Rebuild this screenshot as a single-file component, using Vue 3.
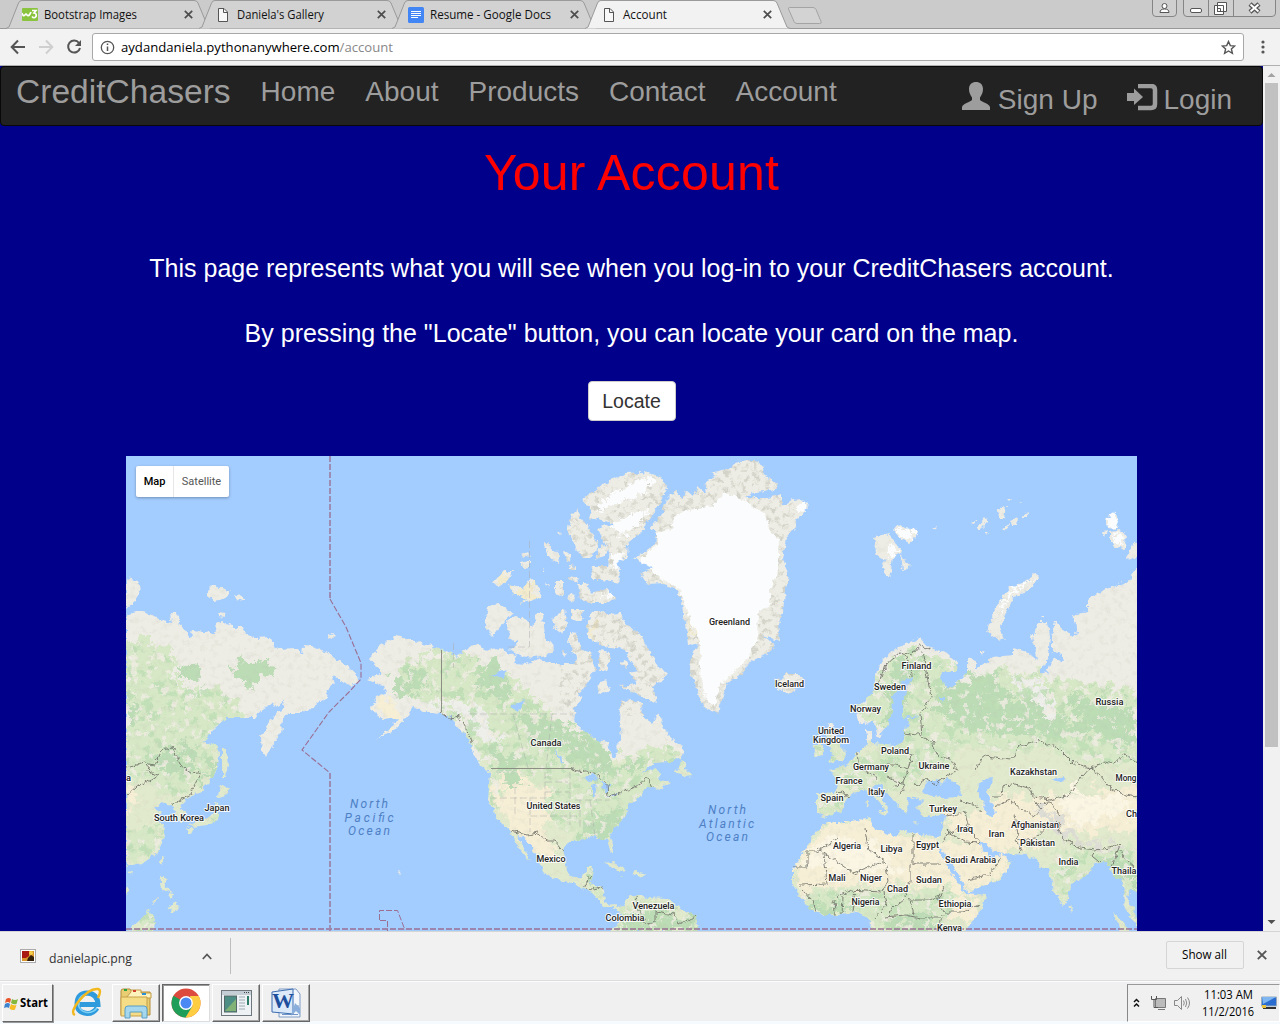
<script setup>
const tabs = [
  { title: 'Bootstrap Images', icon: 'w3', w: 93 },
  { title: "Daniela's Gallery", icon: 'page', w: 87 },
  { title: 'Resume - Google Docs', icon: 'docs', w: 121 },
  { title: 'Account', icon: 'page', w: 44, active: true },
]
const links = ['Home', 'About', 'Products', 'Contact', 'Account']

const land = [
  // north-east Asia
  '126,615 140,611 152,615 164,621 172,623 170,613 177,613 180,624 190,638 193,630 205,632 214,634 216,624 222,621 232,627 243,627 246,636 255,638 270,637 274,646 278,649 296,648 302,654 303,646 318,648 332,656 345,665 358,675 360,682 350,685 340,680 332,676 334,685 328,690 326,698 313,707 301,713 289,713 283,720 281,733 273,745 266,758 262,752 261,737 269,723 276,713 282,710 284,700 276,707 273,703 263,708 256,718 226,718 216,727 203,742 216,745 219,753 218,767 209,783 198,793 189,797 181,805 186,818 181,823 176,818 174,807 168,805 163,802 154,808 163,812 156,818 163,827 165,837 158,853 143,863 131,865 126,867',
  '126,578 138,580 141,590 136,600 126,609',
  '208,590 213,585 219,588 223,588 230,593 227,598 214,601 208,596',
  '235,594 246,599 243,601 236,599', '218,612 225,613 226,617 219,616', '327,636 333,633 337,637 328,639',
  '222,747 226,750 228,765 225,778 222,778 222,757',
  '221,785 231,789 226,795 218,797 219,790',
  '216,802 220,807 218,820 206,825 193,827 189,825 206,820 213,813',
  '186,827 194,829 191,835 188,834', '162,856 165,857 162,864 160,861',
  '160,876 165,876 166,887 171,893 162,889', '168,893 174,894 172,899', '166,908 177,903 178,910 174,912',
  '149,910 155,919 154,931 128,931 140,920', '127,872 133,871 130,876', '126,883 129,890 126,896', '152,903 158,897 159,898 153,904',
  // North America and the top of South America
  '369,658 380,646 397,636 408,639 427,645 442,649 457,656 472,646 478,644 485,651 497,648 517,656 513,663 527,664 537,659 550,664 573,664 577,656 568,643 570,633 577,634 580,649 590,653 595,669 590,679 583,689 578,696 583,698 575,707 573,720 580,727 597,740 608,742 610,753 615,757 618,752 617,743 622,737 620,723 621,702 630,699 642,705 643,717 652,723 658,713 663,727 673,740 683,748 682,757 670,762 653,763 642,773 657,768 660,780 670,782 660,790 655,788 650,786 642,792 640,798 630,803 625,817 613,830 610,837 613,850 611,853 607,840 593,837 580,840 568,843 563,853 567,870 573,878 582,877 587,867 594,867 590,883 603,887 604,897 607,905 615,904 622,907 628,897 637,895 647,898 667,899 680,908 695,915 698,927 700,932 610,932 618,925 622,913 613,908 605,908 597,898 592,893 580,887 570,882 557,880 543,872 540,860 528,843 517,833 521,842 530,861 527,858 517,845 510,832 497,817 488,800 490,773 480,765 472,750 470,740 458,727 448,715 433,712 423,712 413,707 407,717 397,728 380,738 376,740 390,729 398,718 383,720 371,710 376,697 386,693 383,686 367,679 382,673',
  '488,606 500,604 513,614 503,623 493,636 485,628',
  '505,624 515,616 525,619 533,626 537,613 543,613 545,636 554,648 547,656 533,658 520,656 510,649 518,643 507,638 510,631',
  '508,584 523,588 530,579 542,589 540,598 520,604 527,598 513,594',
  '493,583 503,571 512,571 508,581 497,587', '521,555 527,551 530,557', '520,563 529,561 529,568 524,569',
  '543,543 548,543 559,556 558,563 550,558', '564,552 571,554 570,562 566,560', '558,530 561,532 560,537', '542,567 545,572 543,572', '568,565 576,566 576,569 569,568',
  '577,509 582,519 593,534 597,543 592,558 583,558 577,553 575,543 567,531 572,514',
  '582,499 598,488 613,479 626,473 643,472 660,476 667,488 660,503 657,508 640,533 628,544 627,556 618,563 620,578 618,584 600,579 590,579 593,566 608,566 610,549 604,556 595,560 597,548 606,546 598,529 613,523 590,518 592,511',
  '590,593 607,589 616,599 607,603 590,603 580,599 578,583 587,583', '567,576 577,577 578,583 570,581',
  '555,581 563,581 563,598 555,593', '545,581 551,589 547,586', '570,593 576,595 574,602 568,600',
  '552,619 565,609 567,626 562,633 555,628', '571,609 585,609 580,621 571,619',
  '587,623 593,611 599,611 608,614 620,613 627,624 640,634 650,653 660,669 667,673 660,683 653,686 657,703 640,696 620,686 637,684 630,673 638,671 633,663 623,649 603,646 588,638',
  '600,650 610,652 608,669 598,671', '623,660 628,662 626,668 622,665', '597,685 605,680 611,690 600,694', '562,650 567,654 563,657',
  '682,758 685,768 692,776 685,777 675,773', '603,863 612,862 627,870 620,871', '632,873 638,872 647,874 640,877', '398,871 401,872 399,874', '620,876 625,877 620,877',
  // Greenland and Iceland
  '667,499 675,491 683,498 686,490 693,496 697,486 707,495 705,481 717,476 710,473 730,468 737,461 753,460 765,466 763,474 777,483 775,489 753,493 743,498 767,498 782,494 782,506 792,500 802,499 809,506 797,519 795,528 787,536 783,559 789,576 785,589 783,613 778,623 780,641 762,635 777,646 763,656 748,663 742,674 727,683 723,696 718,714 705,708 698,693 690,669 692,656 698,643 688,646 687,633 683,616 682,599 675,589 663,583 647,584 640,573 653,569 635,558 655,544 657,533 650,528 662,513',
  '775,677 782,680 786,674 800,674 804,683 788,693 778,689',
  // arctic islands north of Russia
  '873,537 890,533 895,543 903,552 893,557 890,578 882,568 885,560 877,557', '893,530 898,524 905,528 918,530 916,537 909,543 900,538', '901,553 906,562 911,566 903,570', '932,529 937,527 935,531',
  '972,523 978,519 975,524', '977,527 985,517 988,522 980,530', '998,510 1006,506 1004,518 999,518', '1010,521 1018,518 1017,525 1012,525', '1021,518 1027,511 1027,518', '1002,529 1009,524 1006,531', '1007,499 1011,499 1008,502', '1019,502 1023,503 1020,504', '985,532 988,532 986,534',
  '1106,521 1114,511 1119,520 1117,529 1107,528', '1110,532 1118,531 1126,533 1125,550 1115,547 1110,540', '1126,560 1134,542 1137,542 1137,558', '1102,532 1107,531 1105,537',
  '1035,574 1039,577 1034,586 1013,599 1004,617 1000,627 1005,641 997,639 987,631 992,616 1001,598 1009,587 1026,582', '979,651 984,651 982,656', '1041,616 1045,616 1044,619',
  // Europe, Asia and Africa
  '877,670 883,660 897,647 920,638 928,647 947,653 958,663 957,672 942,672 940,678 948,688 957,683 967,673 967,658 975,660 975,670 993,657 1013,655 1013,648 1027,652 1037,660 1032,637 1038,622 1048,622 1050,637 1048,657 1040,672 1047,673 1053,657 1063,663 1062,655 1052,652 1052,637 1055,620 1060,627 1073,637 1078,633 1072,615 1088,612 1088,600 1103,590 1127,582 1137,567 1142,565 1142,897 1130,890 1127,897 1138,920 1138,926 1123,907 1125,893 1122,880 1113,877 1110,867 1103,862 1093,865 1090,873 1070,885 1068,900 1063,907 1053,890 1048,867 1040,867 1037,860 1027,855 1000,853 993,850 980,840 983,850 990,857 999,856 1002,853 1012,863 1000,880 967,892 963,882 950,862 940,847 939,850 950,870 965,893 987,895 980,913 967,927 965,932 870,932 871,920 858,912 830,915 813,912 800,897 793,885 793,870 805,850 815,833 827,822 847,822 870,817 873,828 897,837 900,830 913,833 940,837 943,823 945,815 923,817 917,807 923,800 908,797 907,815 898,805 893,800 880,785 872,787 888,807 887,813 880,802 865,790 850,795 840,812 823,817 817,813 817,792 835,793 838,780 830,770 847,765 858,752 868,745 866,730 872,730 872,743 897,745 903,742 903,728 910,727 908,718 923,715 903,717 903,700 912,678 903,680 892,697 893,710 887,727 878,737 873,720 860,725 857,713 857,707 873,693',
  '828,723 833,725 831,732 838,738 842,748 847,753 843,760 828,763 833,755 830,747 827,735', '815,745 823,745 823,755 814,757', '866,801 869,801 868,808', '878,811 886,811 885,816', '912,821 920,822 914,823', '1069,903 1074,908 1071,912', '1113,913 1123,921 1130,932 1122,932',
]

const green = [
  '126,640 150,640 175,660 180,690 215,690 235,700 240,715 205,735 215,750 205,780 170,800 160,790 126,775',
  '400,668 420,655 445,655 470,655 490,662 515,680 540,705 560,720 600,740 612,760 680,745 682,757 660,780 640,800 625,820 610,835 580,840 555,825 545,800 550,780 490,770 460,725 440,710 400,690',
  '490,770 505,775 500,790 497,810 488,800', '120,825 165,825 165,850 126,866', '128,932 145,912 156,920 156,932', '585,868 595,868 590,885 608,890 600,900', '620,905 640,898 700,920 700,932 615,932',
  '860,715 880,670 905,650 960,665 945,690 1000,665 1060,680 1137,690 1137,760 1100,765 1040,745 1010,755 970,745 900,790 850,790 830,780 850,760 900,740 905,700 890,700 885,730',
  '800,895 830,890 900,895 950,888 955,905 940,932 870,932 860,912 815,912', '1050,870 1060,850 1137,850 1137,932 1120,880 1090,870 1068,900',
  '825,730 840,745 845,760 828,762', '814,745 823,745 823,757 814,757', '820,800 845,800 838,815 820,815', '185,823 218,822 215,806 185,820',
]
const dark = [
  '180,668 196,662 204,672 198,683 184,680', '235,663 258,655 270,665 262,680 250,688 238,678', '127,700 140,708 138,725 126,724', '150,755 185,745 195,770 185,775 160,765',
  '212,756 218,760 208,780 198,788', '478,660 500,665 512,690 500,700 480,690', '520,715 560,720 605,745 612,765 640,760 640,772 600,775 570,755 530,740', '490,745 515,755 520,785 508,790 500,768 488,763',
  '390,680 420,668 430,680 400,700', '575,830 600,820 618,805 625,812 610,834 585,838', '895,660 920,655 915,675 900,720 885,735', '940,690 990,670 1010,690 970,715 930,715',
  '950,700 1040,700 1060,720 1090,725 1080,740 1000,735 960,730', '1060,690 1100,700 1137,710 1137,745 1095,735', '635,915 660,908 695,920 698,932 620,932', '890,918 930,915 935,932 885,932', '1105,865 1120,855 1137,870 1137,890 1118,878', '808,905 850,905 855,912 815,912',
  '589,868 594,868 592,878 585,878',
]
const sand = [
  '497,780 515,770 535,782 548,790 545,825 555,850 545,868 530,850 500,818', '372,700 395,700 400,722 385,720', '540,718 580,735 600,742 575,735', '126,790 138,780 140,805 126,812',
  '793,880 805,850 825,822 870,817 900,835 940,838 960,880 963,890 900,888 850,885 800,890', '942,842 985,845 1012,863 1000,880 967,892 950,862', '945,818 985,810 1030,812 1045,845 1000,855 960,838',
  '985,795 1040,800 1060,795 1137,785 1137,830 1070,830 1040,825 1000,815', '955,895 985,895 970,925 950,915',
]
const borders = [
  'M126 768 L145 763 155 765 162 750 172 748 180 765 192 774 202 772 195 785 190 795 172 805',
  'M126 796 L137 786 152 780 158 776 147 770 149 764', 'M571 768 L578 771 593 773 607 784 608 797 628 790 640 785 647 777 652 787', 'M441 712 L452 720 458 715 470 735 472 742',
  'M510 831 L527 835 538 833 547 841 555 841 565 853', 'M583 887 L590 876 M587 890 L603 887 M635 897 L638 908 645 925 655 922 655 912 674 915 678 924 690 920 695 916',
  'M877 690 L885 665 900 652 912 655 920 646 930 649 M903 653 L911 665 912 678 M922 650 L926 670 931 697 920 714 922 735 M903 733 L918 735 932 742 937 755 950 758 957 770 935 785 927 780 915 785 M897 748 L912 755 908 770 895 765 880 765 M858 752 L860 768 877 778 M908 770 L903 782 892 787 M887 777 L905 785 900 795 M837 791 L850 796',
  'M976 770 L980 760 985 756 1012 759 1018 748 1040 739 1044 743 1056 746 1072 762 1090 768 1075 785 1070 795 1050 800 1035 797 1028 788 1015 784 1002 787 1001 797 992 797 M1090 768 L1105 762 1112 764 1125 755 1137 762 M1090 768 L1100 775 1110 788 1125 795 1137 797',
  'M995 807 L1010 800 1020 808 1034 817 1042 810 1036 803 1050 802 1060 815 M1015 815 L1018 835 1016 840 1022 850 1020 854 M1018 840 L1036 838 1048 825 1058 823 1062 838 1080 848 1095 850 1110 848 1120 845 M1095 850 L1092 855 1100 862 M1120 845 L1115 858 1111 867 M1120 850 L1126 860 1135 868',
  'M945 816 L965 813 970 830 980 842 M942 842 L948 833 957 829 M948 832 L965 842 978 843 M960 800 L975 805 983 812 M967 880 L988 875 997 865 1001 856',
  'M817 848 L853 873 885 861 868 850 865 828 M913 834 V864 H940 M885 861 L888 880 882 892 850 890 838 898 M793 867 H807 V852 H817 L838 838 M824 854 L827 884 800 885 M910 862 L910 882 905 892 910 900 930 900 940 895 M855 890 L852 912 M884 892 L886 905 875 918 M888 912 L905 898 M945 885 L938 900 944 912 962 912 980 905 M886 917 L905 915 920 918 940 918 M943 915 L938 930 M815 912 L812 900 803 890 M835 914 L834 900 M842 913 L843 897 M910 900 L914 915',
]
const lakes = ['922,793 927,782 937,779 942,784 947,778 960,785 961,797 940,798', '977,785 985,779 992,778 990,787 986,793 993,803 995,815 987,815 982,800', '583,778 592,774 598,779 590,781', '592,785 597,783 595,798 592,796', '600,781 609,785 607,793 603,788', '606,799 618,792 617,795', '554,747 563,760 562,764', '510,707 525,700 518,712', '490,675 507,668 505,678', '940,697 945,697 944,703', '1051,780 1065,777 1062,782']

const labels = [
  ['Greenland', 729.5, 625, 41], ['Iceland', 789.5, 687, 29], ['Finland', 916.5, 669, 30], ['Sweden', 890, 690, 32], ['Norway', 865.5, 712, 31],
  ['Russia', 1109.5, 705, 28], ['United', 831, 734, 26], ['Kingdom', 831, 743, 36], ['Poland', 895, 754, 28], ['Germany', 871, 770, 36], ['Ukraine', 934, 769, 31],
  ['France', 849, 784, 27], ['Italy', 876.5, 795, 17], ['Spain', 832, 801, 23], ['Turkey', 943, 812, 28], ['Kazakhstan', 1033.5, 775, 47],
  ['Iraq', 965, 832, 16], ['Iran', 996.5, 837, 16], ['Afghanistan', 1035, 828, 48], ['Pakistan', 1037.5, 846, 35], ['India', 1068.5, 865, 20],
  ['Algeria', 847, 849, 28], ['Libya', 891.5, 852, 22], ['Egypt', 927.5, 848, 23], ['Saudi Arabia', 970.5, 863, 51], ['Mali', 837, 881, 17], ['Niger', 871, 881, 22],
  ['Chad', 897.5, 892, 21], ['Sudan', 929, 883, 26], ['Nigeria', 865.5, 905, 28], ['Ethiopia', 955, 907, 33], ['Kenya', 949.5, 931, 25],
  ['Canada', 546, 746, 31], ['United States', 553.5, 809, 54], ['Mexico', 551, 862, 29], ['Venezuela', 653.5, 909, 42], ['Colombia', 625, 921, 39],
  ['Japan', 217, 811, 25], ['South Korea', 179, 821, 50], ['Mong', 1126, 781, 21], ['Ch', 1131.5, 817, 11], ['Thaila', 1124, 874, 25], ['a', 128.5, 781, 5],
]
const oceans = [
  ['North', 369, 808, 38], ['Pacific', 369, 822, 49], ['Ocean', 369, 835, 42],
  ['North', 727, 814, 38], ['Atlantic', 726.5, 828, 55], ['Ocean', 727, 841, 42],
]
</script>

<template>
  <div class="screen">
    <header class="tabstrip">
      <div v-for="t in tabs" :key="t.title" class="tab" :class="{ active: t.active }">
        <svg class="shape" width="206" height="29" viewBox="0 0 206 29">
          <path d="M0 28.5 L3 27 L12.5 3 Q13.500 .5 16 .5 H188 Q191 .5 192 3 L202 27 L205 28.500" />
        </svg>
        <svg v-if="t.icon === 'w3'" class="fav" width="16" height="16" viewBox="0 0 16 16">
          <rect y="1" width="16" height="13" rx="1" fill="#8ac43f" />
          <path d="M0 6 Q1 10 3 8 Q4 6 5 8 Q7 10 9 5" fill="none" stroke="#fff" stroke-width="1.700" />
          <path d="M10 3.500 H14 L12 6 Q15 6.500 14 9.500 Q12 12 10 9.500" fill="none" stroke="#fff" stroke-width="1.700" />
        </svg>
        <svg v-else-if="t.icon === 'docs'" class="fav" width="16" height="16" viewBox="0 0 16 16">
          <rect width="16" height="16" rx="1.500" fill="#4285f4" />
          <path d="M3 4.500 H13 M3 6.500 H13 M3 8.500 H13 M3 10.500 H10" stroke="#fff" stroke-width="1" />
        </svg>
        <svg v-else class="fav" width="16" height="16" viewBox="0 0 16 16">
          <path d="M3.500 1.500 H9 L12.500 5 V14.500 H3.500 Z" fill="#f8f8f8" stroke="#555" />
          <path d="M8.500 1.500 V5.500 H12.500" fill="none" stroke="#555" />
        </svg>
        <svg class="label" width="128" height="20"><text x="0" y="14" :textLength="t.w" lengthAdjust="spacingAndGlyphs">{{ t.title }}</text></svg>
        <svg class="close" width="9" height="9"><path d="M.8 .8 L8.200 8.200 M8.200 .8 L.8 8.200" stroke="#4d4d4d" stroke-width="1.700" /></svg>
      </div>
      <svg class="newtab" width="36" height="19"><path d="M2.500 .5 H26 Q28 .5 29 2.500 L34 14.500 Q35 16.500 32.500 16.500 H10 Q8 16.500 7 14.500 L1.500 2 Q1 .5 2.500 .5Z" fill="#d3d3d3" stroke="#a4a4a4" /></svg>
      <span class="grow"></span>
      <svg class="user" width="25" height="17"><path d="M.5 0 V13 Q.5 16.500 4 16.500 H21 Q24.500 16.500 24.500 13 V0" fill="#cfcfcf" stroke="#858585" /><circle cx="12.500" cy="6" r="2.500" fill="#fff" stroke="#555" /><path d="M8 12.500 Q8 9 12.500 9 Q17 9 17 12.500Z" fill="#fff" stroke="#555" /></svg>
      <svg class="winctl" width="93" height="17">
        <path d="M.5 0 V13 Q.5 16.500 4 16.500 H89 Q92.500 16.500 92.500 13 V0 M25.500 0 V16 M50.500 0 V16" fill="#cfcfcf" stroke="#858585" />
        <rect x="7.500" y="8.500" width="11" height="4" rx="1.500" fill="#fff" stroke="#555" />
        <path d="M34.500 2.500 H43.500 V11.500 H34.500Z M31.500 5.500 H40.500 V14.500 H31.500Z M34.500 8.500 H37.500 V11.500 H34.500Z" fill="#fff" stroke="#555" />
        <path d="M67 4 L76 12 M76 4 L67 12" stroke="#555" stroke-width="4.500" /><path d="M67.500 4.500 L75.500 11.500 M75.500 4.500 L67.500 11.500" stroke="#fff" stroke-width="2" />
      </svg>
    </header>

    <div class="toolbar">
      <svg class="tools" width="84" height="24" viewBox="0 0 84 24" fill="none" stroke-width="2">
        <path d="M25 12 H12 M18 5.500 L11.700 12 L18 18.500" stroke="#555" />
        <path d="M39 12 H52 M46 5.500 L52.300 12 L46 18.500" stroke="#cfcfcf" />
        <path d="M79 8 A6 6 0 1 0 80 13" stroke="#555" /><path d="M81 5 V11 H75Z" fill="#555" />
      </svg>
      <div class="omnibox">
        <svg width="15" height="15" viewBox="0 0 15 15" fill="none" stroke="#555"><circle cx="7.500" cy="7.500" r="6.200" stroke-width="1.300" /><path d="M7.500 6.500 V11 M7.500 3.500 V5" stroke-width="1.500" /></svg>
        <svg class="url" width="280" height="20"><text x="0" y="15" textLength="272" lengthAdjust="spacingAndGlyphs">aydandaniela.pythonanywhere.com<tspan fill="#888">/account</tspan></text></svg>
        <span class="grow"></span>
        <svg width="15" height="15" viewBox="0 0 15 15"><path d="M7.500 1.500 L9.300 5.600 L13.700 6 L10.400 9 L11.400 13.300 L7.500 11 L3.600 13.300 L4.600 9 L1.300 6 L5.700 5.600Z" fill="none" stroke="#555" stroke-width="1.400" /></svg>
      </div>
      <svg class="dots" width="4" height="14" fill="#555"><circle cx="2" cy="2" r="1.600" /><circle cx="2" cy="7" r="1.600" /><circle cx="2" cy="12" r="1.600" /></svg>
    </div>

    <div class="viewport">
      <div class="page">
        <nav class="navbar">
          <a class="brand">CreditChasers</a>
          <a v-for="l in links" :key="l" class="link">{{ l }}</a>
          <span class="grow"></span>
          <a class="link right">
            <svg width="28" height="28" viewBox="0 0 28 28"><path d="M14 0 C18 0 21 2.500 21 7 C21 11 19.500 13 18 15.500 V18 C20 20 27 21.500 28 25 V28 H0 V25 C1 21.500 8 20 10 18 V15.500 C8.500 13 7 11 7 7 C7 2.500 10 0 14 0Z" fill="#9d9d9d" /></svg>
            <span>Sign Up</span>
          </a>
          <a class="link right login">
            <svg width="31" height="27" viewBox="0 0 31 27"><path d="M0 9 H7 V4.500 L16 13 L7 21 V17 H0Z" fill="#9d9d9d" /><path d="M11 2 H24 Q28 2 28 6 V20 Q28 24 24 24 H11" fill="none" stroke="#9d9d9d" stroke-width="4.500" /></svg>
            <span>Login</span>
          </a>
        </nav>
        <h1>Your Account</h1>
        <p>This page represents what you will see when you log-in to your CreditChasers account.</p>
        <p class="second">By pressing the "Locate" button, you can locate your card on the map.</p>
        <button class="locate">Locate</button>

        <div class="map">
          <svg width="1011" height="475" viewBox="126 456 1011 475">
            <defs>
              <clipPath id="landClip"><polygon v-for="(p, i) in land" :key="i" :points="p" /></clipPath>
              <clipPath id="greenClip"><polygon v-for="(p, i) in green" :key="i" :points="p" /></clipPath>
              <filter id="coast" x="116" y="446" width="1031" height="495" filterUnits="userSpaceOnUse">
                <feTurbulence type="fractalNoise" baseFrequency=".18" numOctaves="3" seed="4" result="n" />
                <feDisplacementMap in="SourceGraphic" in2="n" scale="6.500" xChannelSelector="R" yChannelSelector="G" />
              </filter>
              <filter id="ragged" x="116" y="446" width="1031" height="495" filterUnits="userSpaceOnUse">
                <feTurbulence type="fractalNoise" baseFrequency=".09" numOctaves="4" seed="9" result="n" />
                <feDisplacementMap in="SourceGraphic" in2="n" scale="32" xChannelSelector="R" yChannelSelector="G" />
              </filter>
              <filter id="rough" x="116" y="446" width="1031" height="495" filterUnits="userSpaceOnUse">
                <feTurbulence type="fractalNoise" baseFrequency=".2" numOctaves="3" seed="2" result="n" />
                <feDisplacementMap in="SourceGraphic" in2="n" scale="13" xChannelSelector="R" yChannelSelector="G" />
              </filter>
              <filter id="speckPale" x="116" y="446" width="1031" height="495" filterUnits="userSpaceOnUse" color-interpolation-filters="sRGB">
                <feTurbulence type="fractalNoise" baseFrequency=".13" numOctaves="4" seed="21" />
                <feColorMatrix values="0 0 0 0 .94  0 0 0 0 .93  0 0 0 0 .89  0 0 0 12 -7.100" />
              </filter>
              <filter id="speckGreen" x="116" y="446" width="1031" height="495" filterUnits="userSpaceOnUse" color-interpolation-filters="sRGB">
                <feTurbulence type="fractalNoise" baseFrequency=".09" numOctaves="4" seed="33" />
                <feColorMatrix values="0 0 0 0 .74  0 0 0 0 .87  0 0 0 0 .71  0 0 0 12 -6.700" />
              </filter>
              <filter id="relief" x="116" y="446" width="1031" height="495" filterUnits="userSpaceOnUse" color-interpolation-filters="sRGB">
                <feTurbulence type="fractalNoise" baseFrequency=".17" numOctaves="4" seed="12" />
                <feColorMatrix values="0 0 0 0 .72  0 0 0 0 .72  0 0 0 0 .67  0 0 0 4 -2" />
              </filter>
            </defs>
            <rect x="126" y="456" width="1011" height="475" fill="#a3ccff" />
            <g filter="url(#coast)">
              <g clip-path="url(#landClip)">
                <rect x="116" y="446" width="1031" height="495" fill="#eeede5" />
                <path d="M126 735 H250 V932 H126Z M480 760 H700 V932 H480Z M800 740 H1147 V932 H790Z" fill="#e2eacd" />
                <g filter="url(#ragged)">
                  <polygon v-for="(p, i) in green" :key="i" :points="p" fill="#d6e8c6" />
                  <polygon v-for="(p, i) in sand" :key="i" :points="p" fill="#f6efd6" />
                  <polygon v-for="(p, i) in dark" :key="i" :points="p" fill="#bcdcb6" />
                  <path d="M683 625 H690 V640Z M590 613 L600 618 594 640 587 630Z M493 573 H510 V588Z M507 588 H540 V602 H515Z" fill="#f3ebcd" />
                  <path d="M1010 675 L1050 685 1060 710 1045 715 1025 695Z M415 700 L480 705 500 745 480 740 455 715Z" fill="#eeeeea" />
                  <path d="M1055 795 L1075 790 1130 800 1120 815 1070 825Z M800 865 L830 835 880 845 900 870 850 875Z" fill="#fbf6e4" />
                  <path d="M1035 808 L1055 812 1075 838 1120 846 1115 850 1065 842Z" fill="#deddd5" />
                </g>
                <g clip-path="url(#greenClip)">
                  <rect x="116" y="446" width="1031" height="495" filter="url(#speckGreen)" opacity=".8" />
                  <rect x="116" y="446" width="1031" height="495" filter="url(#speckPale)" opacity=".8" />
                </g>
                <rect x="116" y="446" width="1031" height="495" filter="url(#relief)" opacity=".13" />
                <svg x="560" y="456" width="255" height="260" viewBox="560 456 255 260"><rect x="116" y="446" width="1031" height="495" filter="url(#relief)" opacity=".4" /></svg>
                <path d="M672 518 L680 512 712 506 725 493 745 500 765 515 772 535 780 540 778 570 770 590 770 605 758 612 757 640 750 655 738 668 720 685 715 705 706 700 700 670 700 640 690 620 680 590 655 575 640 560 657 545 657 532 673 530Z M798 505 L806 501 806 510 798 514Z" fill="#fbfcfd" />
                <path d="M597 505 L620 490 640 480 655 478 645 492 625 500 600 510Z M610 525 L635 512 650 510 638 525 622 535 614 532Z M610 555 L625 550 622 568 612 570Z M602 595 L614 592 612 600Z M893 530 L915 530 914 537 905 540Z M888 545 L900 550 888 560Z M1106 513 H1118 V528 H1108Z M1112 533 L1124 535 1122 545 1114 543Z M1035 577 L1015 592 1005 602 1000 618 1003 600 1014 588Z" fill="#fbfcfd" filter="url(#rough)" />
              </g>
              <polygon v-for="(p, i) in lakes" :key="i" :points="p" fill="#a3ccff" />
              <g fill="none" stroke="#75756d" stroke-width=".9"><path v-for="(d, i) in borders" :key="i" :d="d" /></g>
            </g>
            <path d="M491 768.500 H571 M441.500 650 V712" fill="none" stroke="#85857d" stroke-width=".9" />
            <g fill="none" stroke="#aaa" stroke-width=".8" stroke-dasharray="7 3" opacity=".6">
              <path d="M529.500 541 V647 M508 647 H529 M453.500 643 V668 M470 714 H573 M513 714 L528 768 M552 714 L546 769 M490 798 H545 M515 787 V815 M545 772 V805 M530 798 V832 M545 782 H568 M545 792 H570 M530 816 H580 M570 772 V825 M580 800 V830 M590 800 L595 835 M575 800 H610" />
            </g>
            <g fill="none" stroke="#9a6f92">
              <path d="M330 456 V599" stroke-width="1.800" stroke-dasharray="6 2" opacity=".75" />
              <path d="M330 599 L346 627 361 663 V679 L349 692 329 712 302 750 330 773" stroke-width="1.100" stroke-dasharray="6 2" />
              <path d="M330 773 V931 M126 929 H1137" stroke-width="1.800" stroke-dasharray="6 2" opacity=".75" />
              <path d="M379.500 920 V910.500 H397.500 L405 930 M380 920.500 H387.500 V931" stroke-dasharray="6 2" />
            </g>
            <g class="places"><text v-for="(l, i) in labels" :key="i" :x="l[1]" :y="l[2]" :textLength="l[3]" lengthAdjust="spacingAndGlyphs">{{ l[0] }}</text></g>
            <g class="oceans"><text v-for="(l, i) in oceans" :key="i" :x="l[1]" :y="l[2]" :textLength="l[3]">{{ l[0] }}</text></g>
          </svg>
          <div class="maptype"><span class="on">Map</span><span class="sat">Satellite</span></div>
        </div>
      </div>
      <div class="scrollbar">
        <svg width="9" height="6"><path d="M4.500 1 L8.500 5 H.5Z" fill="#a3a3a3" /></svg>
        <span class="thumb"></span>
        <span class="grow"></span>
        <svg width="9" height="6"><path d="M.5 1 H8.500 L4.500 5Z" fill="#505050" /></svg>
      </div>
    </div>

    <div class="downloads">
      <svg class="file" width="16" height="14"><rect x=".5" y=".5" width="15" height="13" fill="#fff" stroke="#aaa" /><rect x="2" y="2" width="12" height="10" fill="#d9962c" /><path d="M2 2 H9 V7 L6 9 H2Z" fill="#a91a12" /><path d="M8 9 L11 6 L14 8 V12 H7Z" fill="#35200c" /><circle cx="11" cy="4" r="2" fill="#f5cf4a" /></svg>
      <svg class="fname" width="90" height="20"><text x="0" y="15" textLength="83" lengthAdjust="spacingAndGlyphs">danielapic.png</text></svg>
      <svg class="chev" width="10" height="7"><path d="M.8 6 L5 1.500 L9.200 6" fill="none" stroke="#555" stroke-width="1.700" /></svg>
      <span class="rule"></span>
      <span class="grow"></span>
      <div class="showall"><svg width="48" height="20"><text x="1" y="14" textLength="45" lengthAdjust="spacingAndGlyphs">Show all</text></svg></div>
      <svg class="dx" width="10" height="10"><path d="M.8 .8 L9.200 9.200 M9.200 .8 L.8 9.200" stroke="#555" stroke-width="1.900" /></svg>
    </div>

    <footer class="taskbar">
      <div class="start">
        <svg width="15" height="15" viewBox="0 0 15 15"><path d="M2 3 Q5 1 7 3 L6 7 Q4 5 1 7Z" fill="#e8562a" /><path d="M8 3 Q11 5 14 3 L12.500 8 Q10 9 7 7Z" fill="#84b83c" /><path d="M1 8 Q4 6 6 8 L5 12 Q3 10.500 0 12Z" fill="#3c83cf" /><path d="M7 8 Q10 10 12.500 9 L11 13.500 Q8 15 5.500 12.500Z" fill="#f6bd25" /></svg>
        <svg width="30" height="20"><text x="0" y="14" textLength="28" lengthAdjust="spacingAndGlyphs">Start</text></svg>
      </div>
      <svg class="ie" width="32" height="32" viewBox="0 0 32 32"><path d="M26 21 Q22 27 16 26.500 Q6 25.500 6 16.500 Q6.500 6.500 16 6 Q26.500 6.500 27 17.500 H9" fill="none" stroke="#2f9bdc" stroke-width="5" /><path d="M26 21 Q22 26 16 25.500 Q8 24.500 7 16 Q8 8 16 7" fill="none" stroke="#7fd3f7" stroke-width="1.500" /><path d="M4 28 Q-1 26 7 15 Q18 1 27 2 Q31 3 27 11" fill="none" stroke="#f2b81d" stroke-width="2.400" /></svg>
      <div class="task">
        <svg width="32" height="32" viewBox="0 0 32 32"><path d="M1 4 Q1 2 3 2 H10 L12 5 H30 V28 H1Z" fill="#e9cd72" stroke="#b48d3b" /><path d="M11 5 V3 H21 V6 H31 V11 H6Z" fill="#fff3bd" stroke="#c19a45" /><path d="M1 10 H27 V29 H1Z" fill="#f5dc87" stroke="#c6a14b" /><path d="M4 3 H7 M13 4 H16 M22 7 H25" stroke="#d3412e" stroke-width="2" /><path d="M4 3 H7" stroke="#27a344" stroke-width="2" /><path d="M22 7 H26" stroke="#2a91d8" stroke-width="2" /><path d="M5 31 V22 Q5 19 8 19 H24 Q27 19 27 22 V31 H22 V25 H10 V31Z" fill="#a5d7ef" stroke="#5b9fc4" /></svg>
      </div>
      <div class="task current">
        <svg width="30" height="30" viewBox="0 0 30 30"><circle cx="15" cy="15" r="14.500" fill="#dd4b3e" /><path d="M2.400 7.800 A14.500 14.500 0 0 0 15 29.500 L21.500 18.500 L15 15Z" fill="#1e9e58" /><path d="M27.700 8 A14.500 14.500 0 0 1 14.500 29.500 L21.500 18 L19 8Z" fill="#ffcd42" /><circle cx="15" cy="15" r="6.900" fill="#fff" /><circle cx="15" cy="15" r="5.500" fill="#4a89f3" /></svg>
      </div>
      <div class="task">
        <svg width="31" height="26" viewBox="0 0 31 26"><rect x=".5" y=".5" width="30" height="25" fill="#eef2f5" stroke="#6e777d" /><path d="M1 3 H30" stroke="#c4ced4" stroke-width="4" /><path d="M23 2.500 H29" stroke="#444" stroke-dasharray="1 1" /><rect x="3.500" y="6" width="12" height="16" fill="#4c8e85" stroke="#566" /><path d="M4 21 L15 9 V21Z" fill="#81b276" /><path d="M18 7 H24 M18 10 H24 M18 13 H24 M18 16 H24 M18 19 H24" stroke="#9daab2" /><path d="M27 6 V15" stroke="#2c7a68" stroke-width="2" /></svg>
      </div>
      <div class="task">
        <svg width="30" height="30" viewBox="0 0 30 30"><path d="M8 1 H25 L29 6 V29 H8Z" fill="#f3f7fc" stroke="#7e9cc4" /><path d="M24 18 H28 M24 21 H28 M11 26.500 H27" stroke="#7195c8" /><path d="M1 4 L22 1 V26 L1 24Z" fill="#dbe9f9" stroke="#3b6cb1" /><path d="M24 15 L29 20 V27 L25 23 L20 28Z" fill="#8aaedb" /><text x="1" y="20" class="word" textLength="22" lengthAdjust="spacingAndGlyphs">W</text></svg>
      </div>
      <span class="grow"></span>
      <div class="tray">
        <svg width="7" height="10"><path d="M1 4 L3.500 1.500 L6 4 M1 8.500 L3.500 6 L6 8.500" fill="none" stroke="#111" stroke-width="1.500" /></svg>
        <svg class="net" width="17" height="16" viewBox="0 0 17 16"><path d="M5.500 3.500 H15.500 V12.500 H5.500Z M8 14.500 H15" fill="#bbb" stroke="#777" /><path d="M1.500 1 V4.500 H6.500 V1 M4 5 V12.500 H8" fill="none" stroke="#555" /></svg>
        <svg class="vol" width="17" height="16" viewBox="0 0 17 16"><path d="M.5 5.500 H3.500 L7.500 1.500 V14.500 L3.500 10.500 H.5Z" fill="#eee" stroke="#888" /><path d="M9.500 5.500 Q11 8 9.500 10.500 M11.500 4 Q14 8 11.500 12 M13.500 2.500 Q17.500 8 13.500 13.500" fill="none" stroke="#888" /></svg>
        <svg class="clock" width="55" height="38"><text x="3" y="15" textLength="49" lengthAdjust="spacingAndGlyphs">11:03 AM</text><text x="1" y="32" textLength="52" lengthAdjust="spacingAndGlyphs">11/2/2016</text></svg>
        <svg width="16" height="14" viewBox="0 0 16 14"><path d="M.5 1 H15.500 V10 H.5Z" fill="#2a6ccf" stroke="#9ab" /><path d="M1 1 H15 L2 8Z" fill="#7db6f1" /><path d="M2 12 H15" stroke="#333" stroke-width="2" /><path d="M1 9 H5 V12 H1Z" fill="#e8c33b" /></svg>
      </div>
    </footer>
  </div>
</template>

<style>
body { margin: 0; overflow: hidden; }
</style>
<style scoped>
.screen { width: 1280px; height: 1024px; display: flex; flex-direction: column; overflow: hidden; font-family: "Open Sans", "Noto Sans", sans-serif; }
.screen * { box-sizing: border-box; }
svg { display: block; flex: none; }
.grow { flex: 1; }
.tabstrip { height: 29px; flex: none; background: #cbcbcb; border-bottom: 1px solid #999; display: flex; align-items: flex-start; padding-left: 6px; }
.tab { position: relative; width: 205px; height: 29px; margin-right: -12px; display: flex; align-items: center; flex: none; padding-left: 16px; z-index: 1; }
.tab.active { z-index: 3; }
.shape { position: absolute; left: 0; top: 0; }
.shape path { fill: #d2d2d2; stroke: #9a9a9a; }
.active .shape path { fill: #f2f2f2; }
.fav { position: relative; }
.label { position: relative; margin-left: 6px; font-size: 12px; fill: #111; overflow: visible; }
.close { position: relative; margin-left: 12px; }
.newtab { margin: 7px 0 0 9px; }
.user { margin-right: 6px; }
.winctl { margin-right: 4px; }
.toolbar { height: 37px; flex: none; background: #f2f2f2; border-bottom: 1px solid #b0b0b0; display: flex; align-items: center; }
.omnibox { width: 1152px; height: 28px; margin: 0 0 0 8px; border: 1px solid #a8a8a8; border-radius: 3px; background: #fff; display: flex; align-items: center; padding: 0 7px 0 7px; }
.url { margin-left: 6px; font-size: 13px; overflow: visible; }
.dots { margin-left: 17px; }
.viewport { height: 865px; flex: none; display: flex; overflow: hidden; }
.page { width: 1263px; background: #00008b; display: flex; flex-direction: column; align-items: center; font-family: "Liberation Sans", Arial, sans-serif; }
.navbar { width: 1263px; height: 60px; flex: none; background: #222; border: 1px solid #080808; border-radius: 4px; display: flex; align-items: flex-start; color: #9d9d9d; padding-right: 15px; }
.brand { font-size: 33.600px; line-height: 40px; padding: 5px 15px 0; }
.link { font-size: 28px; line-height: 32px; padding: 9px 15px 0; }
.right { display: flex; padding-top: 17px; }
.right svg { margin: -2px 8px 0 0; }
.login svg { margin: 0 5px 0 0; }
h1 { margin: 20px 0 0; font-weight: 400; font-size: 50px; line-height: 55px; letter-spacing: .2px; color: #f00; }
p { margin: 49px 0 0; font-size: 25px; line-height: 36px; color: #fff; white-space: nowrap; }
.second { margin-top: 29px; }
.locate { margin: 30px 0 0; width: 88px; height: 40px; flex: none; border: 1px solid #ccc; border-radius: 4px; background: #fff; color: #333; font: 19.500px "Liberation Sans", Arial, sans-serif; padding: 0; }
.map { position: relative; margin-top: 35px; width: 1011px; height: 475px; flex: none; overflow: hidden; }
.maptype { position: absolute; left: 10px; top: 10px; width: 93px; height: 31px; display: flex; background: #fff; border-radius: 2px; box-shadow: 0 1px 3px rgba(0, 0, 0, .3); font: 11px/31px Roboto, sans-serif; }
.on { width: 38px; text-align: center; font-weight: 500; color: #000; border-right: 1px solid #e6e6e6; }
.sat { flex: 1; text-align: center; color: #565656; }
.places { font: 500 9.200px Roboto, sans-serif; text-anchor: middle; fill: #222; stroke: #fff; stroke-opacity: .85; stroke-width: 2px; paint-order: stroke; stroke-linejoin: round; }
.oceans { font: italic 12px Roboto, sans-serif; text-anchor: middle; fill: #4d80c4; }
.scrollbar { width: 17px; background: #f1f1f1; display: flex; flex-direction: column; align-items: center; padding: 6px 0; }
.thumb { width: 13px; height: 664px; margin-top: 5px; background: #c1c1c1; }
.downloads { height: 50px; flex: none; background: #f1f1f1; border-top: 1px solid #d5d5d5; border-bottom: 1px solid #ddd; display: flex; align-items: center; padding-left: 20px; }
.file { margin-top: -1px; }
.fname { margin: 4px 0 0 13px; font-size: 13px; fill: #333; overflow: visible; }
.chev { margin-left: 63px; }
.rule { width: 1px; height: 36px; margin-left: 18px; background: #bdbdbd; }
.showall { width: 78px; height: 28px; margin-top: -2px; border: 1px solid #d5d5d5; border-radius: 2px; display: flex; align-items: center; justify-content: center; font-size: 12px; }
.dx { margin: -2px 13px 0; }
.taskbar { height: 43px; flex: none; background: #f0f0f0; border-top: 1px solid #fafcff; border-bottom: 3px solid #f5faff; display: flex; align-items: flex-start; padding: 2px 0 0 2px; }
.start { width: 51px; height: 38px; border: 1px solid; border-color: #fff #666 #666 #fff; box-shadow: 1px 1px #999; display: flex; align-items: center; gap: 1px; padding-left: 1px; font-size: 13px; font-weight: 700; }
.start svg { overflow: visible; }
.ie { margin: 3px 9px 0 18px; }
.task { width: 48px; height: 38px; margin-right: 2px; border: 1px solid; border-color: #fff #666 #666 #fff; box-shadow: inset -1px -1px #a5a5a5; display: flex; align-items: center; justify-content: center; }
.current { background: #fff; border-color: #666 #ddd #ddd #666; box-shadow: inset 1px 1px #999; }
.word { font: 700 21px "Liberation Serif", serif; fill: #1e4f9d; }
.tray { width: 153px; height: 38px; border: 1px solid; border-color: #999 #fff #fff #888; display: flex; align-items: center; padding-left: 5px; }
.net { margin-left: 10px; }
.vol { margin-left: 7px; }
.clock { margin: 0 5px 0 10px; font-size: 12px; }
</style>
